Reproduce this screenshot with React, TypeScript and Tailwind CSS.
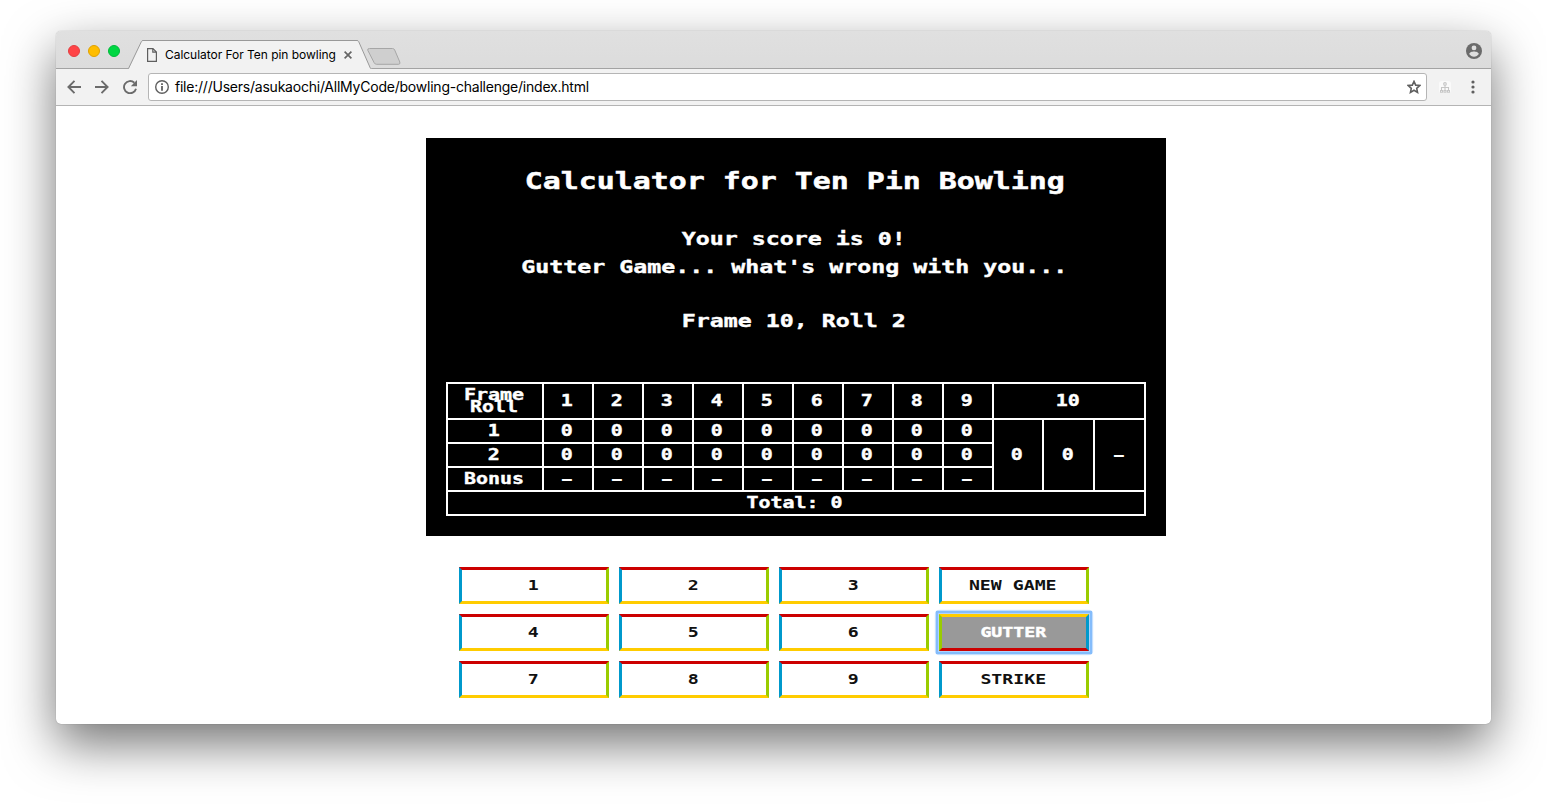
import { ReactNode } from "react";
import { clsx } from "clsx";

function Retro({ children, className }: { children: ReactNode; className?: string }) {
  return (
    <span
      className={clsx(
        "inline-block whitespace-pre font-['DejaVu_Sans_Mono',monospace] font-bold",
        className,
      )}
    >
      {children}
    </span>
  );
}

function TabStrip() {
  return (
    <div className="flex h-[38px] border-b border-[#a3a3a3] bg-linear-to-b from-[#e0e0e0] to-[#dcdcdc]">
      <div className="flex items-center gap-2 pl-3 pt-[2px]">
        <span className="size-3 rounded-full border border-[#e33e41] bg-[#ff4447]" />
        <span className="size-3 rounded-full border border-[#e0a100] bg-[#ffbd00]" />
        <span className="size-3 rounded-full border border-[#00b93b] bg-[#00d742]" />
      </div>
      <div className="relative ml-2 mt-[9px] h-[29px] w-[244px] shrink-0">
        <svg className="absolute left-0 top-0" width="244" height="29" viewBox="0 0 244 29">
          <path d="M0 29 L1 28.5 L13.4 1.6 Q13.8 .5 15 .5 L229 .5 Q230.2 .5 230.7 1.6 L242.5 28.5 L244 29Z" fill="#f2f2f2" />
          <path d="M.5 28.5 L13.4 1.6 Q13.8 .5 15 .5 L229 .5 Q230.2 .5 230.7 1.6 L242.5 28.5" fill="none" stroke="#999" />
        </svg>
        <div className="relative flex h-full items-center pl-[19px]">
          <svg width="10" height="14" viewBox="0 0 10 14" fill="none" stroke="#5f5f5f" strokeWidth="1.2">
            <path d="M.6 .6H6L9.4 4V13.4H.6ZM5.8 .8V4.2H9.3" />
          </svg>
          <span className="ml-[8px] w-[172px] whitespace-nowrap font-['Inter',sans-serif] text-[12px] tracking-[-0.003em] text-black">
            Calculator For Ten pin bowling
          </span>
          <svg className="ml-[7px]" width="8" height="8" viewBox="0 0 8 8" stroke="#666" strokeWidth="1.7">
            <path d="M.6 .6L7.4 7.4M7.4 .6L.6 7.4" />
          </svg>
        </div>
      </div>
      <svg className="-ml-[5px] mt-[17px]" width="34" height="17" viewBox="0 0 34 17">
        <path d="M2.5 .5H25.5Q27 .5 27.7 2L32.8 14Q33.5 16.3 31.5 16.3H9.5Q8 16.3 7.2 14.8L.8 2.3Q.2 .5 2.5 .5Z" fill="#cfcfcf" stroke="#a6a6a6" />
      </svg>
      <div className="ml-auto flex pr-[9px] pt-[12px]">
        <svg width="16" height="16" viewBox="0 0 16 16">
          <circle cx="8" cy="8" r="8" fill="#6b6b6b" />
          <circle cx="8" cy="4.9" r="2.4" fill="#dfdfdf" />
          <path d="M3.2 11.1C3.3 9.4 6.4 8.6 8 8.6S12.7 9.4 12.8 11.1C11.7 12.7 10 13.7 8 13.7S4.3 12.7 3.2 11.1Z" fill="#dfdfdf" />
        </svg>
      </div>
    </div>
  );
}

function Toolbar() {
  return (
    <div className="flex h-[37px] items-center border-b border-[#b4b4b4] bg-[#f2f2f2] pl-[11px] pr-4">
      <svg width="14" height="14" viewBox="0 0 14 14" fill="none" stroke="#6b6b6b" strokeWidth="1.9">
        <path d="M14 7H1.500M7.500 .8L1.400 7L7.500 13.200" />
      </svg>
      <svg className="ml-[14px]" width="14" height="14" viewBox="0 0 14 14" fill="none" stroke="#6b6b6b" strokeWidth="1.9">
        <path d="M0 7H12.500M6.500 .8L12.600 7L6.500 13.200" />
      </svg>
      <svg className="ml-[14px]" width="14" height="14" viewBox="0 0 14 14">
        <path d="M13 8.800A6.100 6.100 0 1 1 11.300 2.700" fill="none" stroke="#6b6b6b" strokeWidth="1.900" />
        <path d="M14 0V6.200H7.800Z" fill="#6b6b6b" />
      </svg>
      <div className="ml-[11px] flex h-7 w-[1279px] items-center rounded-[3px] border border-[#b5b5b5] bg-white pl-[6px] pr-[5px]">
        <svg width="14" height="14" viewBox="0 0 14 14">
          <circle cx="7" cy="7" r="6.3" fill="none" stroke="#5f5f5f" strokeWidth="1.4" />
          <path d="M6.1 3.2H7.900V5H6.100ZM6.100 6H7.900V10.800H6.100Z" fill="#5f5f5f" />
        </svg>
        <span className="ml-[6px] whitespace-nowrap pb-[2px] font-['Inter',sans-serif] text-[14px] tracking-[-0.0162em] text-black">
          file:///Users/asukaochi/AllMyCode/bowling-challenge/index.html
        </span>
        <svg className="ml-auto" width="14" height="14" viewBox="0 0 15 15" fill="none" stroke="#5f5f5f" strokeWidth="1.7">
          <path d="M7.500 1.500L9.300 5.500L13.700 5.900L10.400 8.900L11.300 13.300L7.500 11L3.700 13.300L4.600 8.900L1.300 5.900L5.700 5.500Z" />
        </svg>
      </div>
      <div className="ml-[12px] flex size-3 items-center justify-center rounded-[3px] bg-[#fafafa]">
        <svg width="10" height="11" viewBox="0 0 10 11" fill="none" stroke="#c6c6c6" strokeWidth="1.1">
          <circle cx="5" cy="1.9" r="1.3" />
          <path d="M5 3.2V8M1.500 8V5.500H8.500V8M.5 8.500H2.500V10.300H.5ZM4 8.500H6V10.300H4ZM7.500 8.500H9.500V10.300H7.500Z" />
        </svg>
      </div>
      <svg className="ml-auto" width="4" height="14" viewBox="0 0 4 14" fill="#5f5f5f">
        <circle cx="2" cy="2" r="1.6" />
        <circle cx="2" cy="7" r="1.6" />
        <circle cx="2" cy="12" r="1.6" />
      </svg>
    </div>
  );
}

function Cell({ children, className }: { children: ReactNode; className?: string }) {
  return (
    <div className={clsx("flex items-center justify-center bg-black pr-[2px]", className)}>
      <Retro
        className={clsx(
          "text-center text-[16px] leading-[12px]",
          children === "-" ? "scale-x-[2] scale-y-[0.9]" : "scale-x-[1.246] [-webkit-text-stroke:0.4px]",
        )}
      >
        {children}
      </Retro>
    </div>
  );
}

const frames = [1, 2, 3, 4, 5, 6, 7, 8, 9];

function ScoreTable() {
  return (
    <div className="mx-5 mt-[48px] grid grid-cols-[94px_repeat(10,48px)_49px_49px] grid-rows-[34px_22px_22px_22px_22px] gap-[2px] bg-white p-[2px]">
      <Cell>{"Frame\nRoll"}</Cell>
      {frames.map((f) => (
        <Cell key={f}>{f}</Cell>
      ))}
      <Cell className="col-span-3">10</Cell>
      <Cell>1</Cell>
      {frames.map((f) => (
        <Cell key={f}>0</Cell>
      ))}
      <Cell className="row-span-3">0</Cell>
      <Cell className="row-span-3">0</Cell>
      <Cell className="row-span-3">-</Cell>
      <Cell>2</Cell>
      {frames.map((f) => (
        <Cell key={f}>0</Cell>
      ))}
      <Cell>Bonus</Cell>
      {frames.map((f) => (
        <Cell key={f}>-</Cell>
      ))}
      <Cell className="col-span-full">Total: 0</Cell>
    </div>
  );
}

const buttons = ["1", "2", "3", "NEW GAME", "4", "5", "6", "GUTTER", "7", "8", "9", "STRIKE"];

function KeyPad() {
  return (
    <div className="ml-[403px] mt-[31px] grid w-[630px] grid-cols-4 gap-[10px]">
      {buttons.map((label) => (
        <button
          key={label}
          className={clsx(
            "flex h-[37px] items-center justify-center border-[3px] pb-px pr-[2px]",
            label === "GUTTER"
              ? "border-t-[#ffcc00] border-r-[#0099cc] border-b-[#cc0000] border-l-[#99cc00] bg-[#999] text-white shadow-[0_0_0_1px_#b0d3fd,0_0_0_3px_#84bcfb,0_0_1px_4px_#c5dffd] [clip-path:inset(-5px_round_7px)]"
              : "border-t-[#cc0000] border-r-[#99cc00] border-b-[#ffcc00] border-l-[#0099cc] bg-white text-[#111]",
          )}
        >
          <Retro
            className={clsx(
              "scale-x-[1.3] text-[14px] leading-[16px]",
              label === "GUTTER" && "[-webkit-text-stroke:0.4px]",
            )}
          >
            {label}
          </Retro>
        </button>
      ))}
    </div>
  );
}

export default function App() {
  return (
    <div className="h-[804px] w-[1547px] overflow-hidden bg-white pl-[56px] pt-[31px]">
      <div className="h-[693px] w-[1435px] overflow-hidden rounded-[5px] bg-white shadow-[0_0_1px_rgba(0,0,0,0.4),0_20px_50px_rgba(0,0,0,0.55)]">
        <TabStrip />
        <Toolbar />
        <main>
          <section className="ml-[370px] mt-8 flex h-[398px] w-[740px] flex-col bg-black pt-[25px] text-center text-white">
            <h1 className="h-9 pr-[3px] leading-9">
              <Retro className="scale-x-[1.3] text-[23px] [-webkit-text-stroke:0.5px]">Calculator for Ten Pin Bowling</Retro>
            </h1>
            <div className="mt-[25px] pr-[4px] text-[18px] leading-7">
              <p className="h-7">
                <Retro className="scale-x-[1.292] [-webkit-text-stroke:0.4px]">Your score is 0!</Retro>
              </p>
              <p className="h-7">
                <Retro className="scale-x-[1.292] [-webkit-text-stroke:0.4px]">Gutter Game... what's wrong with you...</Retro>
              </p>
              <p className="mt-[26px] h-7">
                <Retro className="scale-x-[1.292] [-webkit-text-stroke:0.4px]">Frame 10, Roll 2</Retro>
              </p>
            </div>
            <ScoreTable />
          </section>
          <KeyPad />
        </main>
      </div>
    </div>
  );
}
